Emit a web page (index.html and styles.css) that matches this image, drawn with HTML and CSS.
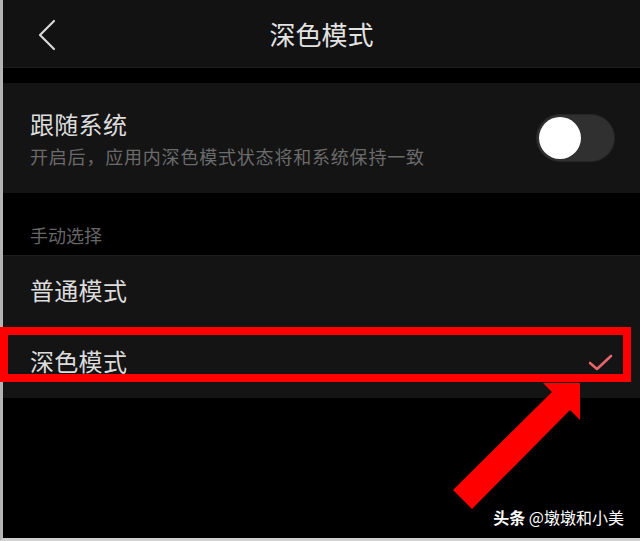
FILE: index.html
```html
<!DOCTYPE html>
<html lang="zh-CN">
<head>
    <meta charset="UTF-8">
    <meta name="viewport" content="width=device-width, initial-scale=1.0">
    <title>深色模式</title>
    <link rel="stylesheet" href="styles.css">
</head>
<body>

    <div class="screen">
        <header class="topbar">
            <div class="back">
                <svg width="20" height="32" viewBox="0 0 20 32">
                    <polyline points="17,2 3,16 17,30" fill="none" stroke="#d8d8d8" stroke-width="2.2" stroke-linecap="round" stroke-linejoin="round"/>
                </svg>
            </div>
            <h1 class="title">深色模式</h1>
            <div></div>
        </header>

        <div class="spacer"></div>

        <div class="card follow">
            <div class="follow-text">
                <div class="item-title">跟随系统</div>
                <div class="item-desc">开启后，应用内深色模式状态将和系统保持一致</div>
            </div>
            <div class="switch">
                <div class="knob"></div>
            </div>
        </div>

        <div class="section-label">手动选择</div>

        <div class="card list">
            <div class="row">
                <span class="item-title">普通模式</span>
            </div>
            <div class="row">
                <span class="item-title">深色模式</span>
                <svg class="check" width="26" height="20" viewBox="0 0 26 20">
                    <polyline points="2,11 9,17 23,4" fill="none" stroke="#e5676b" stroke-width="2.6" stroke-linecap="round" stroke-linejoin="round"/>
                </svg>
            </div>
        </div>
    </div>

    <!-- annotation on top of the screenshot -->
    <div class="highlight"></div>
    <svg class="arrow" width="640" height="541" viewBox="0 0 640 541">
        <polygon points="580,383 543,383 552,392 453,490 472,509 570,410 580,420" fill="#ff0000"/>
    </svg>
    <div class="watermark"><b>头条</b> @墩墩和小美</div>

</body>
</html>
```

FILE: styles.css
```css
* {
    margin: 0;
    padding: 0;
    box-sizing: border-box;
}

body {
    position: relative;
    width: 640px;
    height: 541px;
    overflow: hidden;
    background: #000;
    font-family: "Noto Sans CJK SC", "Noto Sans", sans-serif;
    color: #dcdcdc;
}

.screen {
    height: 541px;
    border-left: 3px solid #b4b4b4;
    border-bottom: 3px solid #d0d0d0;
    display: flex;
    flex-direction: column;
}

.topbar {
    height: 68px;
    background: #121212;
    border-bottom: 1px solid #1e1e1e;
    display: grid;
    grid-template-columns: 1fr auto 1fr;
    align-items: center;
}

.back {
    padding-left: 34px;
    display: flex;
    padding-top: 2px;
}

.title {
    font-size: 26px;
    font-weight: 400;
    color: #e2e2e2;
    line-height: 34px;
}

.spacer {
    height: 15px;
}

.card {
    background: #141414;
}

.follow {
    height: 110px;
    display: flex;
    align-items: center;
    justify-content: space-between;
    padding: 0 25px 0 27px;
}

.follow-text {
    margin-top: 2px;
}

.item-title {
    font-size: 24px;
    line-height: 30px;
    color: #dcdcdc;
    letter-spacing: 0.3px;
}

.item-desc {
    margin-top: 4px;
    font-size: 18px;
    line-height: 26px;
    letter-spacing: 0.8px;
    color: #6b6b6b;
}

.switch {
    width: 79px;
    height: 48px;
    border-radius: 24px;
    background: #303030;
    border: 1px solid #262626;
    padding: 2px;
}

.knob {
    width: 42px;
    height: 42px;
    border-radius: 50%;
    background: #fff;
}

.section-label {
    height: 62px;
    display: flex;
    align-items: flex-end;
    padding: 0 0 8px 27px;
    font-size: 18px;
    line-height: 24px;
    color: #666;
}

.list {
    border-top: 1px solid #1e1e1e;
}

.row {
    height: 71px;
    display: flex;
    align-items: center;
    justify-content: space-between;
    padding: 0 26px 4px 27px;
}

.check {
    margin-top: 2px;
}

.highlight {
    position: absolute;
    left: 0;
    top: 327px;
    width: 631px;
    height: 55px;
    border: 8px solid #ff0000;
}

.arrow {
    position: absolute;
    left: 0;
    top: 0;
}

.watermark {
    position: absolute;
    right: 16px;
    top: 506px;
    font-size: 16px;
    line-height: 22px;
    color: #fff;
    text-shadow: 0 0 2px rgba(0, 0, 0, 0.6);
}

.watermark b {
    font-weight: 700;
}
```
